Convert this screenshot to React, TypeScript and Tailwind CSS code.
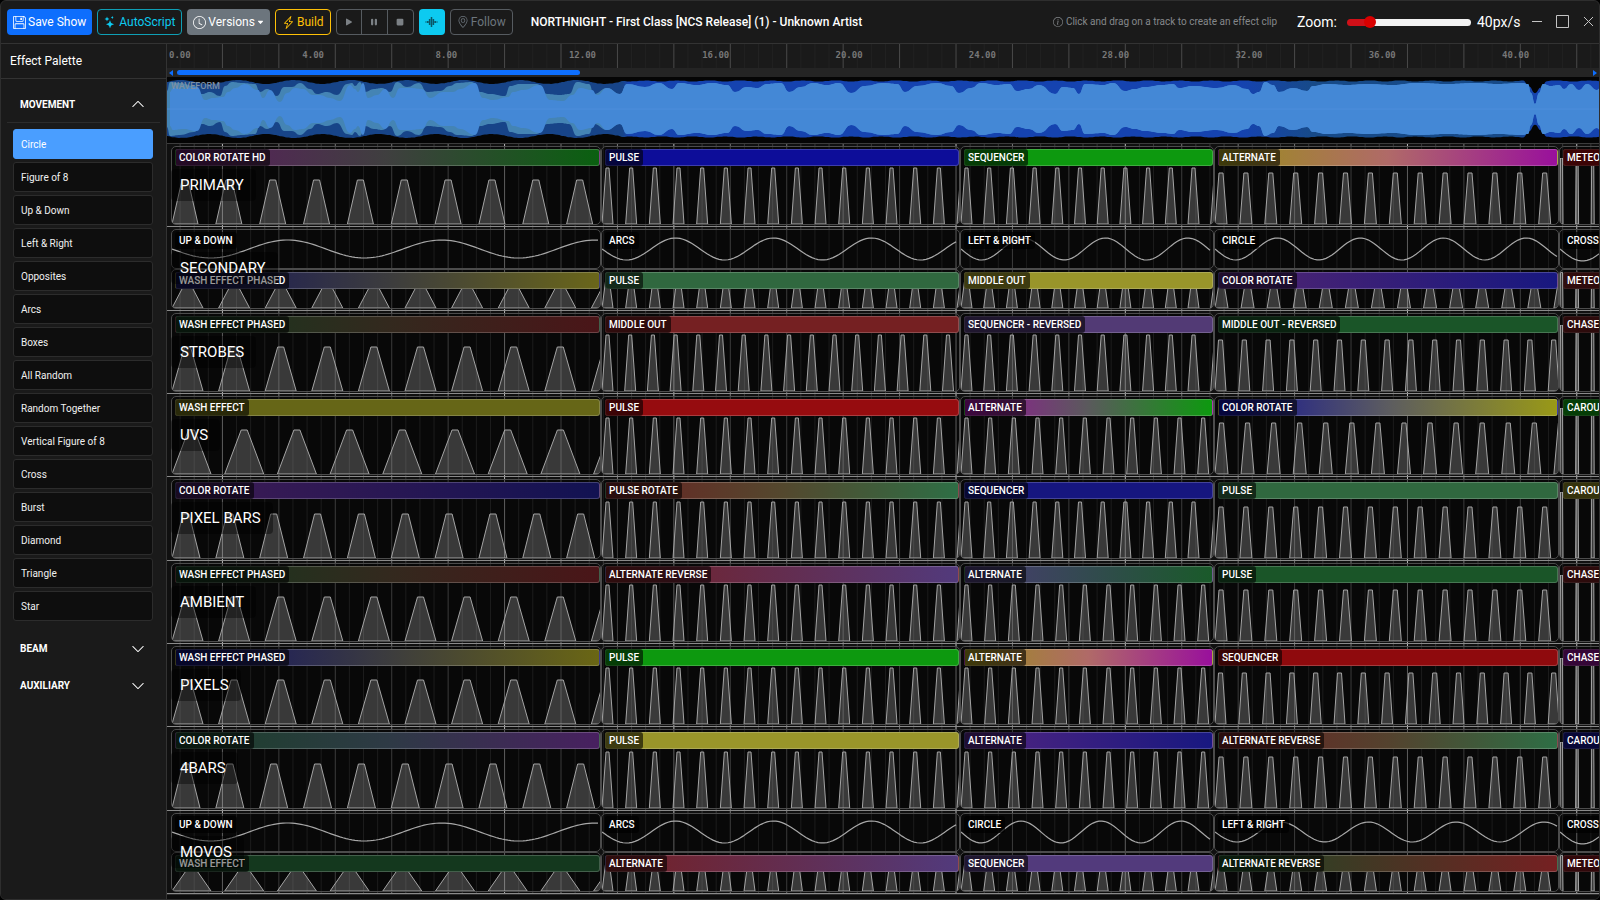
import React, { useState } from 'react';
import {
  BsFloppy,
  BsStars,
  BsClock,
  BsLightningCharge,
  BsPlayFill,
  BsPauseFill,
  BsStopFill,
  BsGeoAlt,
  BsInfoCircle,
  BsChevronUp,
  BsChevronDown,
  BsCaretDownFill,
} from 'react-icons/bs';

interface PulseShape {
  period: number;
  base: number;
  top: number;
  height: number;
}

interface Clip {
  name: string;
  colors: string[];
  shape: PulseShape;
}

interface Motion {
  name: string;
  period: number;
  amp: number;
}

interface Track {
  name: string;
  motions?: Motion[];
  clips: Clip[];
}

const BEAT = 56.43;
const LABEL_STEP = 133.3;

// width of every section of the song on the timeline
const SECTIONS = [430, 359, 254, 345, 400];

const shape = (period: number, base: number, top: number, height: number): PulseShape => ({ period, base, top, height });

const rotateHd = shape(43.85, 26, 6, 44);
const rotateSlow = shape(43.85, 28, 6, 44);
const washPhased = shape(46.6, 31, 6, 44);
const wash = shape(52.7, 39, 6, 44);
const pulse = shape(23.67, 11, 3, 56);
const middle = shape(22.7, 11, 3, 56);
const alt = shape(24.9, 12, 4, 51);
const quick = shape(23.8, 11, 4, 51);
const rotate = shape(26.07, 13, 4, 51);
const chase = shape(15.6, 3, 2, 66);

const clip = (name: string, colors: string[], s: PulseShape): Clip => ({ name, colors, shape: s });

const TRACKS: Track[] = [
  {
    name: 'PRIMARY',
    clips: [
      clip('COLOR ROTATE HD', ['#5c1a60', '#3f3f3f', '#0a6010'], rotateHd),
      clip('PULSE', ['#0d0d99'], pulse),
      clip('SEQUENCER', ['#0d990f'], middle),
      clip('ALTERNATE', ['#998f1a', '#b06a68', '#99109c'], alt),
      clip('METEOR', ['#960c0f'], chase),
    ],
  },
  {
    name: 'SECONDARY',
    motions: [
      { name: 'UP & DOWN', period: 154, amp: 9 },
      { name: 'ARCS', period: 98, amp: 11 },
      { name: 'LEFT & RIGHT', period: 82.5, amp: 11 },
      { name: 'CIRCLE', period: 83, amp: 11 },
      { name: 'CROSS', period: 90, amp: 12 },
    ],
    clips: [
      clip('WASH EFFECT PHASED', ['#14145a', '#3c3c3e', '#6a661a'], washPhased),
      clip('PULSE', ['#30683f'], pulse),
      clip('MIDDLE OUT', ['#99952a'], middle),
      clip('COLOR ROTATE', ['#522570', '#181880'], rotate),
      clip('METEOR', ['#752022'], chase),
    ],
  },
  {
    name: 'STROBES',
    clips: [
      clip('WASH EFFECT PHASED', ['#14381e', '#33291e', '#4a1518'], washPhased),
      clip('MIDDLE OUT', ['#752022'], middle),
      clip('SEQUENCER - REVERSED', ['#523a75'], middle),
      clip('MIDDLE OUT - REVERSED', ['#1a5528'], quick),
      clip('CHASE', ['#701c20'], chase),
    ],
  },
  {
    name: 'UVS',
    clips: [
      clip('WASH EFFECT', ['#666617'], wash),
      clip('PULSE', ['#960c0f'], pulse),
      clip('ALTERNATE', ['#99109c', '#5a5a5c', '#0d990f'], pulse),
      clip('COLOR ROTATE', ['#0d0d99', '#5c5c60', '#999917'], rotate),
      clip('CAROUSEL', ['#0d990f'], chase),
    ],
  },
  {
    name: 'PIXEL BARS',
    clips: [
      clip('COLOR ROTATE', ['#3f1c55', '#121252'], rotateSlow),
      clip('PULSE ROTATE', ['#6a2022', '#54482e', '#2e6e45'], pulse),
      clip('SEQUENCER', ['#16167f'], middle),
      clip('PULSE', ['#30683f'], alt),
      clip('CAROUSEL', ['#858022'], chase),
    ],
  },
  {
    name: 'AMBIENT',
    clips: [
      clip('WASH EFFECT PHASED', ['#14381e', '#33291e', '#4a1518'], washPhased),
      clip('ALTERNATE REVERSE', ['#752022', '#523a7c'], pulse),
      clip('ALTERNATE', ['#4b3a75', '#1a5a2a'], pulse),
      clip('PULSE', ['#1a5528'], alt),
      clip('CHASE', ['#701c20'], chase),
    ],
  },
  {
    name: 'PIXELS',
    clips: [
      clip('WASH EFFECT PHASED', ['#10106a', '#3c3c3e', '#6a6614'], washPhased),
      clip('PULSE', ['#0d990f'], pulse),
      clip('ALTERNATE', ['#998f1a', '#b06a68', '#99109c'], pulse),
      clip('SEQUENCER', ['#8f0a0d'], quick),
      clip('CHASE', ['#85108a'], chase),
    ],
  },
  {
    name: '4BARS',
    clips: [
      clip('COLOR ROTATE', ['#1a4028', '#2e3a45', '#482060'], rotateSlow),
      clip('PULSE', ['#99952a'], pulse),
      clip('ALTERNATE', ['#522580', '#181880'], pulse),
      clip('ALTERNATE REVERSE', ['#6a2022', '#54422e', '#2e6e45'], alt),
      clip('CAROUSEL', ['#14148a'], chase),
    ],
  },
  {
    name: 'MOVOS',
    motions: [
      { name: 'UP & DOWN', period: 154, amp: 9 },
      { name: 'ARCS', period: 98, amp: 11 },
      { name: 'CIRCLE', period: 80, amp: 11 },
      { name: 'LEFT & RIGHT', period: 87.7, amp: 10 },
      { name: 'CROSS', period: 90, amp: 12 },
    ],
    clips: [
      clip('WASH EFFECT', ['#14381e'], wash),
      clip('ALTERNATE', ['#752022', '#523a7c'], pulse),
      clip('SEQUENCER', ['#523a7c'], middle),
      clip('ALTERNATE REVERSE', ['#1a4a25', '#752022'], alt),
      clip('METEOR', ['#7d161c'], chase),
    ],
  },
];

const MOVEMENTS = [
  'Circle', 'Figure of 8', 'Up & Down', 'Left & Right', 'Opposites', 'Arcs', 'Boxes', 'All Random',
  'Random Together', 'Vertical Figure of 8', 'Cross', 'Burst', 'Diamond', 'Triangle', 'Star',
];

// [x, half height] pairs of the loud band of the audio
const LOUD: [number, number][] = [
  [0, 18], [3, 27], [13, 26], [27, 23], [35, 15], [43, 17], [53, 13], [58, 23], [65, 27], [75, 26], [88, 25], [93, 17],
  [100, 20], [110, 13], [117, 22], [125, 22], [133, 26], [143, 20], [150, 15], [160, 17], [170, 14], [180, 25], [185, 26],
  [188, 23], [193, 27], [198, 17], [207, 20], [215, 21], [223, 17], [230, 27], [240, 22], [252, 26], [260, 17], [273, 18],
  [283, 23], [290, 26], [305, 27], [313, 17], [323, 15], [338, 13], [343, 23], [353, 25], [370, 25], [380, 15], [393, 14],
  [402, 15], [410, 27], [422, 25], [427, 15], [440, 21], [453, 15], [460, 25], [478, 22], [492, 26], [505, 20], [512, 26],
  [530, 24], [545, 26], [560, 24], [568, 17], [580, 22], [590, 21], [600, 25], [614, 26], [622, 17], [634, 22], [646, 26],
  [660, 24], [672, 26], [684, 16], [698, 23], [716, 26], [730, 25], [738, 17], [750, 23], [770, 26], [784, 23], [792, 16],
  [804, 21], [814, 26], [830, 24], [842, 25], [850, 18], [862, 20], [872, 24], [888, 15], [896, 22], [906, 21], [912, 15],
  [918, 25], [936, 24], [946, 26], [958, 18], [968, 20], [978, 22], [996, 24], [1006, 25], [1012, 21], [1026, 23],
  [1050, 21], [1066, 24], [1080, 20], [1086, 15], [1092, 17], [1098, 27], [1106, 24], [1112, 17], [1126, 21], [1140, 18],
  [1146, 23], [1160, 25], [1180, 24], [1200, 25], [1225, 24], [1250, 26], [1280, 25], [1310, 26], [1330, 25], [1355, 26],
  [1361, 25], [1364, 16], [1368, 5], [1372, 16], [1376, 25], [1384, 23], [1392, 24], [1397, 20], [1404, 25], [1412, 19],
  [1420, 25], [1430, 19], [1434, 22],
];

const smooth = (points: [number, number][]) =>
  points.map(([x, y], i) => {
    if (i === 0) return `${x} ${y}`;
    const [px, py] = points[i - 1];
    const mid = (px + x) / 2;
    return `C${mid} ${py} ${mid} ${y} ${x} ${y}`;
  }).join(' ');

const mirrored = (points: [number, number][]) => {
  const top = points.map(([x, h]): [number, number] => [x, 32 - h]);
  const bottom = points.map(([x, h]): [number, number] => [x, 32 + h]).reverse();
  return `M${smooth(top)} L${smooth(bottom)} Z`;
};

const PEAKS: [number, number][] = [];
for (let x = 0; x <= 1440; x += 6) {
  const calm = x < 455 ? 2 * Math.sin(x / 9) - 1 : 0.6 * Math.sin(x / 5);
  const drop = Math.max(0, 12 - Math.abs(x - 1368));
  PEAKS.push([x, 28 + calm - drop]);
}

const Waveform = () => (
  <div className="relative h-[67px] shrink-0 overflow-hidden border-b border-[#3c3c3c] bg-[#050505]">
    <svg className="block h-16 w-full" height="64" aria-hidden="true">
      <defs>
        <linearGradient id="peaks" x1="0" x2="1433" gradientUnits="userSpaceOnUse">
          <stop offset="0.318" stopColor="#174488" />
          <stop offset="0.322" stopColor="#1543b0" />
          <stop offset="0.75" stopColor="#1543b0" />
          <stop offset="0.8" stopColor="#174a88" />
          <stop offset="0.94" stopColor="#174a88" />
          <stop offset="0.955" stopColor="#1543b0" />
        </linearGradient>
        <linearGradient id="mids" x1="0" x2="1433" gradientUnits="userSpaceOnUse">
          <stop offset="0.31" stopColor="#4484b4" />
          <stop offset="0.322" stopColor="#4488d6" />
        </linearGradient>
      </defs>
      <path d={mirrored(PEAKS)} fill="url(#peaks)" />
      <path d={mirrored(LOUD)} fill="url(#mids)" />
      <path d={mirrored(LOUD.map(([x, h], i): [number, number] => [x + (x < 440 ? 3 : 0), x < 440 ? h - (i % 3 === 0 ? 1 : 6) : h]))} fill="#4488d6" />
      <path d="M0 32H1440" stroke="#4c8ddb" />
    </svg>
    <span className="absolute left-1 top-px text-[9px] font-medium leading-4 text-[#7d8fa3]">WAVEFORM</span>
  </div>
);

const Ruler = () => (
  <div className="relative h-6 shrink-0 overflow-hidden bg-[#1a1a1a]">
    <svg className="absolute inset-0 h-full w-full" aria-hidden="true">
      {Array.from({ length: 140 }, (_, i) => (
        <line key={i} x1={(i * BEAT) / 4 - 1} x2={(i * BEAT) / 4 - 1} y1="0" y2="24" stroke={i % 4 === 0 ? '#4a4a4a' : '#222222'} />
      ))}
    </svg>
    {Array.from({ length: 11 }, (_, i) => (
      <span key={i} className="absolute top-[3px] font-['DejaVu_Sans_Mono',monospace] text-[9px] font-bold leading-4 text-[#777777]" style={{ left: i * LABEL_STEP + 2 }}>
        {(i * 4).toFixed(2)}
      </span>
    ))}
  </div>
);

const Grid = () => (
  <svg className="absolute inset-0 h-full w-full" aria-hidden="true">
    {Array.from({ length: 140 }, (_, i) => {
      const beat = i / 4;
      const strong = beat % 8 === 1 || beat % 8 === 6;
      const stroke = strong ? '#bcbcbc' : i % 4 === 0 ? '#777777' : '#383838';
      return <line key={i} x1={beat * BEAT - 1} x2={beat * BEAT - 1} y1="0" y2="100%" stroke={stroke} />;
    })}
  </svg>
);

const Pulses = ({ shape: s, width, scale }: { shape: PulseShape; width: number; scale: number }) => {
  const count = Math.ceil(width / s.period);
  const y = 66 - s.height * scale;
  return (
    <svg className="col-start-1 row-start-1 self-end" width={width} height="66" aria-hidden="true">
      {Array.from({ length: count }, (_, i) => {
        const x = i * s.period;
        const inset = (s.base - s.top) / 2;
        return (
          <polygon
            key={i}
            points={`${x},66 ${x + inset},${y} ${x + inset + s.top},${y} ${x + s.base},66`}
            fill="#ffffff"
            fillOpacity="0.2"
            stroke="#a4a4a4"
          />
        );
      })}
    </svg>
  );
};

const Wave = ({ motion, width }: { motion: Motion; width: number }) => {
  const points: string[] = [];
  for (let x = 0; x <= width - 3; x += 3) {
    points.push(`${x},${15 + motion.amp * Math.sin((2 * Math.PI * x) / motion.period)}`);
  }
  return (
    <svg className="col-start-1 row-start-1 self-center" width={width} height="30" aria-hidden="true">
      <polyline points={points.join(' ')} fill="none" stroke="#a8a8a8" strokeWidth="1.2" />
    </svg>
  );
};

const ClipBox = ({ width, children }: { width: number; children: React.ReactNode }) => (
  <div className="grid shrink-0 grid-cols-1 grid-rows-1 overflow-hidden rounded-[5px] border border-[#4c4c4c] bg-black/50" style={{ width }}>
    {children}
  </div>
);

const fill = (colors: string[]) =>
  colors.length === 1 ? colors[0] : `linear-gradient(90deg, ${colors.join(', ')})`;

const TrackRow = ({ track }: { track: Track }) => (
  <div className="relative flex min-h-0 flex-col border-b border-[#8a8a8a] pb-px pl-1 pt-[2px]">
    {track.motions && (
      <div className="flex min-h-0 flex-1">
        {track.motions.map((motion, i) => (
          <ClipBox key={i} width={SECTIONS[i]}>
            <Wave motion={motion} width={SECTIONS[i]} />
            <div className="z-10 col-start-1 row-start-1 ml-[3px] mt-[2px] flex self-start">
              <span className="whitespace-nowrap rounded-[3px] bg-black/70 px-1 text-[10px] font-medium leading-[17px] text-white">{motion.name}</span>
            </div>
          </ClipBox>
        ))}
      </div>
    )}
    <div className="flex min-h-0 flex-1">
      {track.clips.map((c, i) => (
        <ClipBox key={i} width={SECTIONS[i]}>
          <Pulses shape={c.shape} width={SECTIONS[i]} scale={track.motions ? 0.54 : 1} />
          <div
            className="z-10 col-start-1 row-start-1 ml-[3px] mt-[2px] flex h-[17px] self-start rounded-[3px] border border-white/20"
            style={{ background: fill(c.colors) }}
          >
            <span className="-m-px whitespace-nowrap rounded-[3px] bg-black/60 px-1 text-[10px] font-medium leading-[17px] text-white">{c.name}</span>
          </div>
        </ClipBox>
      ))}
    </div>
    <h3 className="absolute left-1 top-1/2 z-20 -translate-y-1/2 rounded bg-black/40 py-1 pl-[9px] pr-3 text-[15px] font-normal leading-6 text-white">
      {track.name}
    </h3>
  </div>
);

const Header = () => {
  const [zoom, setZoom] = useState(40);
  const percent = ((zoom - 10) / 200) * 100;

  return (
    <header className="flex h-[43px] shrink-0 items-center border-b border-[#333333] pl-[6px] pr-[5px] text-[12px] leading-5">
      <div className="flex shrink-0 items-center gap-[5px]">
        <button className="flex h-[26px] items-center gap-[2px] rounded bg-[#0d6efd] px-[6px] text-white"><BsFloppy size={13} />Save Show</button>
        <button className="flex h-[26px] items-center gap-[3px] rounded border border-[#0f9fb5] px-[6px] text-[#0dcaf0]"><BsStars size={12} />AutoScript</button>
        <button className="flex h-[26px] items-center gap-[2px] rounded bg-[#6c757d] px-[6px] text-white"><BsClock size={13} />Versions<BsCaretDownFill size={7} /></button>
        <button className="flex h-[26px] items-center gap-[2px] rounded border border-[#ffc107] px-[6px] text-[#ffc107]"><BsLightningCharge size={13} />Build</button>
        <div className="flex h-[26px] divide-x divide-[#565b60] rounded border border-[#565b60] text-[#7b8085]">
          <button aria-label="Play" className="flex w-[25px] items-center justify-center"><BsPlayFill size={12} /></button>
          <button aria-label="Pause" className="flex w-[26px] items-center justify-center"><BsPauseFill size={12} /></button>
          <button aria-label="Stop" className="flex w-[25px] items-center justify-center"><BsStopFill size={12} /></button>
        </div>
        <button aria-label="Waveform" className="flex h-[26px] w-[26px] items-center justify-center rounded bg-[#0dcaf0] text-[#0a5666]">
          <svg width="13" height="12" fill="none" stroke="currentColor" strokeWidth="1.5">
            <path d="M1 5.500V6.500M2.800 5V7M4.600 3V9M6.500 1V11M8.400 3V9M10.200 5V7M12 5.500V6.500" />
          </svg>
        </button>
        <button className="flex h-[26px] items-center gap-[2px] rounded border border-[#565b60] px-[6px] text-[#6c757d]"><BsGeoAlt size={12} />Follow</button>
      </div>
      <h1 className="ml-[18px] min-w-0 flex-1 truncate text-[12px] font-medium text-white">NORTHNIGHT - First Class [NCS Release] (1) - Unknown Artist</h1>
      <p className="flex shrink-0 items-center gap-[3px] text-[10px] text-[#85888b]"><BsInfoCircle size={10} />Click and drag on a track to create an effect clip</p>
      <label htmlFor="zoom" className="ml-5 shrink-0 text-[14px] text-white">Zoom:</label>
      <input
        id="zoom"
        type="range"
        min={10}
        max={210}
        value={zoom}
        onChange={(e) => setZoom(Number(e.target.value))}
        className="ml-[10px] h-[7px] w-[124px] shrink-0 appearance-none rounded-full [&::-webkit-slider-thumb]:h-[12px] [&::-webkit-slider-thumb]:w-[12px] [&::-webkit-slider-thumb]:appearance-none [&::-webkit-slider-thumb]:rounded-full [&::-webkit-slider-thumb]:bg-[#d90000]"
        style={{ background: `linear-gradient(90deg, #d01018 ${percent + 4}%, #f2f2f2 ${percent + 4}%)` }}
      />
      <span className="ml-[6px] w-[42px] shrink-0 text-[14px] text-white">{zoom}px/s</span>
      <div className="ml-3 flex shrink-0 items-center gap-[13px] text-[#c4c4c4]">
        <button aria-label="Minimize"><svg width="12" height="14" fill="none" stroke="currentColor"><path d="M1 6.500H11" /></svg></button>
        <button aria-label="Maximize"><svg width="13" height="14" fill="none" stroke="currentColor"><path d="M.5 .5H12.500V12.500H.5Z" /></svg></button>
        <button aria-label="Close"><svg width="12" height="14" fill="none" stroke="currentColor"><path d="M2 2L11 11M11 2L2 11" /></svg></button>
      </div>
    </header>
  );
};

const Sidebar = () => {
  const [selected, setSelected] = useState('Circle');

  return (
    <aside className="flex w-[166px] shrink-0 flex-col border-r border-[#333333] bg-[#1a1a1a]">
      <h2 className="h-[35px] shrink-0 border-b border-[#333333] pl-[9px] text-[12px] leading-[34px] text-white">Effect Palette</h2>
      <div className="px-[6px] pt-[7px]">
        <button className="flex h-[37px] w-full items-center justify-between border-b border-[#2c2c2c] pl-[13px] pr-[15px] text-[10px] font-bold text-white">
          MOVEMENT<BsChevronUp size={14} />
        </button>
        <ul className="mb-[9px] mt-[6px] flex flex-col gap-[3px] pl-[6px] pr-[7px]">
          {MOVEMENTS.map((name) => (
            <li key={name}>
              <button
                onClick={() => setSelected(name)}
                className={`flex h-[30px] w-full items-center rounded-[3px] border px-[7px] text-[10px] ${
                  name === selected ? 'border-[#4a9eff] bg-[#4a9eff] text-white' : 'border-[#2c2c2c] bg-[#0e0e0e] text-[#f0f0f0]'
                }`}
              >
                {name}
              </button>
            </li>
          ))}
        </ul>
        <button className="flex h-[37px] w-full items-center justify-between pl-[13px] pr-[15px] text-[10px] font-bold text-white">
          BEAM<BsChevronDown size={14} />
        </button>
        <button className="flex h-[37px] w-full items-center justify-between pl-[13px] pr-[15px] text-[10px] font-bold text-white">
          AUXILIARY<BsChevronDown size={14} />
        </button>
      </div>
    </aside>
  );
};

const ScrollBar = () => (
  <div className="flex h-[9px] shrink-0 items-center bg-[#242424] px-[2px]">
    <span className="border-y-[3px] border-r-4 border-y-transparent border-r-[#0d6efd]" />
    <div className="flex flex-1 px-[4px]">
      <div className="h-[5px] w-[403px] rounded-full bg-[#0d6efd]" />
    </div>
    <span className="border-y-[3px] border-l-4 border-y-transparent border-l-[#0d6efd]" />
  </div>
);

const App: React.FC = () => (
  <div className="h-screen bg-black font-['Roboto',sans-serif]">
    <div className="flex h-full flex-col overflow-hidden rounded-md border border-[#2e2e2e] bg-[#1a1a1a]">
      <Header />
      <div className="flex min-h-0 flex-1">
        <Sidebar />
        <main className="flex min-w-0 flex-1 flex-col bg-[#101010]">
          <Ruler />
          <ScrollBar />
          <Waveform />
          <div className="relative min-h-0 flex-1 overflow-hidden">
            <Grid />
            <div className="relative grid h-full grid-rows-9">
              {TRACKS.map((track) => (
                <TrackRow key={track.name} track={track} />
              ))}
            </div>
          </div>
          <div className="h-[5px] shrink-0 border-t border-[#2c2c2c] bg-[#0c0c0c]" />
        </main>
      </div>
    </div>
  </div>
);

export default App;
